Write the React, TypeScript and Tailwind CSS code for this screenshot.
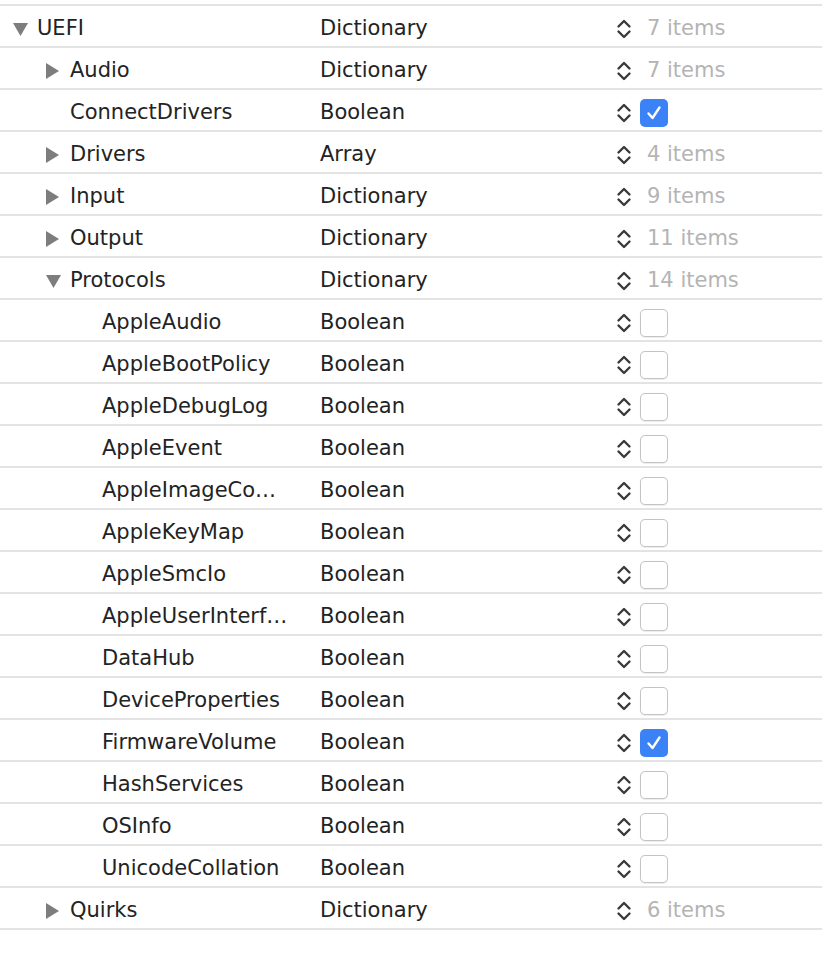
import React from "react";

type Row = {
  name: string;
  type: string;
  level: number;
  tri?: "down" | "right";
  items?: string;
  check?: boolean;
};

const rows: Row[] = [
  { name: "UEFI", type: "Dictionary", level: 0, tri: "down", items: "7 items" },
  { name: "Audio", type: "Dictionary", level: 1, tri: "right", items: "7 items" },
  { name: "ConnectDrivers", type: "Boolean", level: 1, check: true },
  { name: "Drivers", type: "Array", level: 1, tri: "right", items: "4 items" },
  { name: "Input", type: "Dictionary", level: 1, tri: "right", items: "9 items" },
  { name: "Output", type: "Dictionary", level: 1, tri: "right", items: "11 items" },
  { name: "Protocols", type: "Dictionary", level: 1, tri: "down", items: "14 items" },
  { name: "AppleAudio", type: "Boolean", level: 2, check: false },
  { name: "AppleBootPolicy", type: "Boolean", level: 2, check: false },
  { name: "AppleDebugLog", type: "Boolean", level: 2, check: false },
  { name: "AppleEvent", type: "Boolean", level: 2, check: false },
  { name: "AppleImageCo…", type: "Boolean", level: 2, check: false },
  { name: "AppleKeyMap", type: "Boolean", level: 2, check: false },
  { name: "AppleSmcIo", type: "Boolean", level: 2, check: false },
  { name: "AppleUserInterf…", type: "Boolean", level: 2, check: false },
  { name: "DataHub", type: "Boolean", level: 2, check: false },
  { name: "DeviceProperties", type: "Boolean", level: 2, check: false },
  { name: "FirmwareVolume", type: "Boolean", level: 2, check: true },
  { name: "HashServices", type: "Boolean", level: 2, check: false },
  { name: "OSInfo", type: "Boolean", level: 2, check: false },
  { name: "UnicodeCollation", type: "Boolean", level: 2, check: false },
  { name: "Quirks", type: "Dictionary", level: 1, tri: "right", items: "6 items" },
];

const indentClass = ["pl-[13px]", "pl-[46px]", "pl-[78px]"];

function Triangle({ dir }: { dir: "down" | "right" }) {
  if (dir === "down") {
    return (
      <svg width="15" height="13" viewBox="0 0 15 13">
        <polygon points="0,0 15,0 7.5,13" fill="#7d7d7d" />
      </svg>
    );
  }
  return (
    <svg width="13" height="16" viewBox="0 0 13 16">
      <polygon points="0,0 13,8 0,16" fill="#7d7d7d" />
    </svg>
  );
}

function Stepper() {
  return (
    <svg width="16" height="22" viewBox="0 0 16 22" className="shrink-0">
      <polyline points="2.5,8.5 8,3 13.5,8.5" fill="none" stroke="#3a3a3a" strokeWidth="2.4" strokeLinecap="round" strokeLinejoin="round" />
      <polyline points="2.5,13.5 8,19 13.5,13.5" fill="none" stroke="#3a3a3a" strokeWidth="2.4" strokeLinecap="round" strokeLinejoin="round" />
    </svg>
  );
}

function Checkbox({ checked }: { checked: boolean }) {
  if (checked) {
    return (
      <div className="w-[28px] h-[28px] rounded-[5px] bg-[#3b82f7] flex items-center justify-center">
        <svg width="18" height="18" viewBox="0 0 18 18">
          <polyline points="3.5,9.5 7.5,14 14.5,3.5" fill="none" stroke="#ffffff" strokeWidth="2.4" strokeLinecap="round" strokeLinejoin="round" />
        </svg>
      </div>
    );
  }
  return (
    <div className="w-[28px] h-[28px] rounded-[5px] bg-white border border-[#c4c4c4] shadow-[0_0.5px_1px_rgba(0,0,0,0.08)]" />
  );
}

export default function App() {
  return (
    <div
      className="w-[822px] h-[976px] bg-white pt-[4px]"
      style={{ fontFamily: '"DejaVu Sans", "Liberation Sans", sans-serif' }}
    >
      <div className="border-t-2 border-[#e3e3e3]">
        {rows.map((r, i) => (
          <div key={i} className="flex items-center h-[42px] pt-[6px] border-b-2 border-[#e3e3e3] text-[21px] text-[#232323]">
            <div className={`w-[320px] flex items-center shrink-0 ${indentClass[r.level]}`}>
              <div className="w-[24px] flex items-center">
                {r.tri ? <Triangle dir={r.tri} /> : null}
              </div>
              <span className="whitespace-nowrap">{r.name}</span>
            </div>
            <div className="w-[296px] shrink-0">{r.type}</div>
            <div className="flex items-center">
              <Stepper />
              {r.items !== undefined ? (
                <span className="ml-[15px] text-[#b4b4b4]">{r.items}</span>
              ) : (
                <div className="ml-[8px]">
                  <Checkbox checked={!!r.check} />
                </div>
              )}
            </div>
          </div>
        ))}
      </div>
    </div>
  );
}
